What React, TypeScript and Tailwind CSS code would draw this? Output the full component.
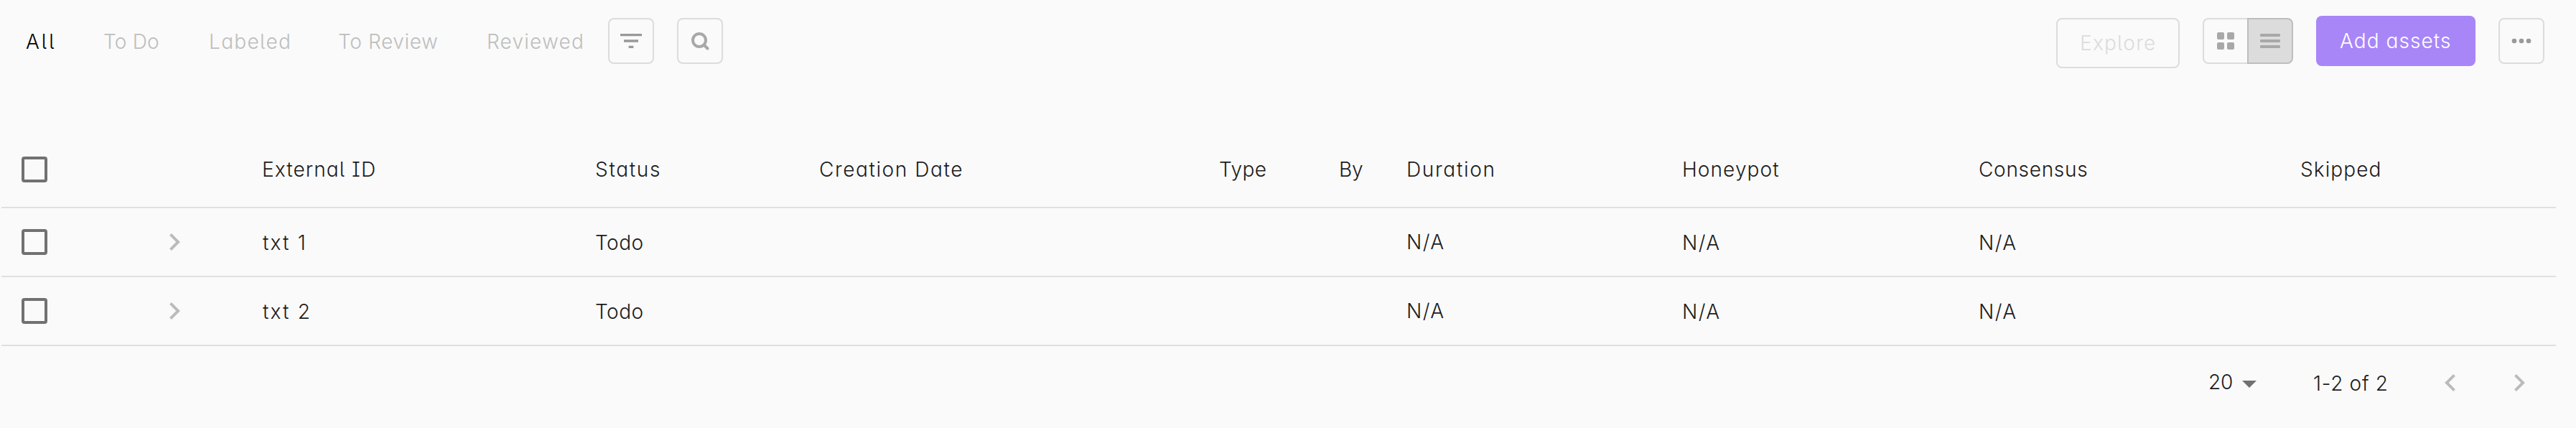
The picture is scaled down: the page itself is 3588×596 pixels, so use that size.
import type { ReactNode } from "react";

const tabs = [
  { label: "All", className: "w-[108px] tracking-[3px] text-black" },
  { label: "To Do", className: "w-[147px] tracking-[0.2px]" },
  { label: "Labeled", className: "w-[180px] tracking-[1.34px]" },
  { label: "To Review", className: "w-[207px] tracking-[0.63px]" },
  { label: "Reviewed", className: "w-[169px] tracking-[1.23px]" },
];

const rows = ["txt 1", "txt 2"];

const gridCols =
  "grid grid-cols-[206px_129px_464px_312px_557px_167px_94px_384px_413px_448px_1fr] items-center border-b-2 border-[#e0e0e0] pl-7";

function IconButton({ label, children }: { label: string; children: ReactNode }) {
  return (
    <button
      aria-label={label}
      className="mt-[25px] flex size-16 shrink-0 items-center justify-center rounded-lg border-2 border-[#dcdcdc]"
    >
      {children}
    </button>
  );
}

function Checkbox() {
  return <span role="checkbox" aria-checked="false" className="block size-9 rounded-[4px] border-4 border-[#717171]" />;
}

function ChevronRight() {
  return (
    <svg viewBox="8.59 6 7.41 12" className="h-6 w-[15px] shrink-0 fill-[#bbbbbb]">
      <path d="M10 6L8.59 7.41 13.17 12l-4.58 4.59L10 18l6-6z" />
    </svg>
  );
}

function ChevronLeft() {
  return (
    <svg viewBox="8 6 7.41 12" className="h-6 w-[15px] shrink-0 fill-[#bbbbbb]">
      <path d="M15.41 7.41L14 6l-6 6 6 6 1.41-1.41L10.83 12z" />
    </svg>
  );
}

function Toolbar() {
  return (
    <header className="flex h-[184px] items-start pr-11">
      <nav className="flex h-[116px] items-center pl-9 text-[#bebebe]">
        {tabs.map((tab) => (
          <a key={tab.label} className={`block whitespace-nowrap ${tab.className}`}>
            {tab.label}
          </a>
        ))}
      </nav>
      <div className="flex gap-8">
        <IconButton label="Filter">
          <svg viewBox="0 0 24 24" className="size-10 fill-[#999999]">
            <path d="M10 18h4v-2h-4v2zM3 6v2h18V6H3zm3 7h12v-2H6v2z" />
          </svg>
        </IconButton>
        <IconButton label="Search">
          <svg viewBox="0 0 26 26" className="size-[26px] fill-none stroke-[#a8a8a8] stroke-4">
            <circle cx="12" cy="12" r="9" />
            <path d="M18.5 18.5L23.5 23.5" strokeLinecap="round" />
          </svg>
        </IconButton>
      </div>
      <div className="ml-auto flex items-start gap-8">
        <button className="mt-[25px] flex h-[70px] w-[172px] items-center rounded-lg border-2 border-[#dcdcdc] pl-[31px] tracking-[1.24px] text-[#dcdcdc]">
          Explore
        </button>
        <div className="mt-[25px] flex h-16 w-[126px]">
          <button
            aria-label="Grid view"
            className="flex w-[62px] items-center justify-center rounded-l-lg border-2 border-r-0 border-[#dcdcdc]"
          >
            <svg viewBox="0 0 24 24" className="size-6 fill-[#a8a8a8]">
              <rect width="10" height="10" rx="2" />
              <rect x="14" width="10" height="10" rx="2" />
              <rect y="14" width="10" height="10" rx="2" />
              <rect x="14" y="14" width="10" height="10" rx="2" />
            </svg>
          </button>
          <button
            aria-label="List view"
            className="flex w-16 items-center justify-center rounded-r-lg border-2 border-[#bdbdbd] bg-[#dcdcdc]"
          >
            <svg viewBox="0 0 28 20" className="h-5 w-7 fill-[#a8a8a8]">
              <rect width="28" height="4" rx="1.2" />
              <rect y="8" width="28" height="4" rx="1.2" />
              <rect y="16" width="28" height="4" rx="1.2" />
            </svg>
          </button>
        </div>
        <button className="mt-[22px] flex h-[70px] w-[222px] items-center rounded-lg bg-[#a886f7] pl-[33px] tracking-[1.07px] whitespace-nowrap text-white">
          Add assets
        </button>
        <IconButton label="More">
          <svg viewBox="0 0 24 24" className="size-10 fill-[#999999]">
            <circle cx="6" cy="12" r="2" />
            <circle cx="12" cy="12" r="2" />
            <circle cx="18" cy="12" r="2" />
          </svg>
        </IconButton>
      </div>
    </header>
  );
}

export default function App() {
  return (
    <div className="h-[596px] w-full overflow-hidden bg-[#fafafa] font-['Inter',sans-serif] text-[28px] leading-10 font-[330] text-[#1c1c1c] [font-feature-settings:'cv11','cv08','cv05']">
      <Toolbar />
      <main className="ml-0.5 w-[3558px]">
        <div className={`h-[106px] whitespace-nowrap ${gridCols}`}>
          <Checkbox />
          <span />
          <span className="tracking-[1.1px]">External ID</span>
          <span className="tracking-[1.7px]">Status</span>
          <span className="tracking-[1.6px]">Creation Date</span>
          <span className="tracking-[0.4px]">Type</span>
          <span className="tracking-[-0.2px]">By</span>
          <span className="tracking-[1.7px]">Duration</span>
          <span className="tracking-[1.1px]">Honeypot</span>
          <span className="tracking-[0.7px]">Consensus</span>
          <span className="tracking-[1.1px]">Skipped</span>
        </div>
        {rows.map((name) => (
          <div key={name} className={`h-24 whitespace-nowrap ${gridCols}`}>
            <Checkbox />
            <ChevronRight />
            <span className="pt-0.5 pl-px tracking-[2.2px]">{name}</span>
            <span className="pt-0.5 tracking-[0.5px]">Todo</span>
            <span />
            <span />
            <span />
            <span className="tracking-[1.5px]">N/A</span>
            <span className="pt-0.5 tracking-[1.5px]">N/A</span>
            <span className="pt-0.5 tracking-[1.5px]">N/A</span>
            <span />
          </div>
        ))}
        <footer className="flex h-[102px] items-center justify-end pr-[43px]">
          <span className="w-[47px] pb-0.5 tracking-[-0.2px]">20</span>
          <svg viewBox="0 0 20 10" className="mt-1 h-2.5 w-5 shrink-0 fill-[#717171]">
            <path d="M0 0h20L10 10z" />
          </svg>
          <span className="ml-[79px] w-[183px] pt-0.5 tracking-[0.7px] whitespace-nowrap">1-2 of 2</span>
          <button aria-label="Previous page" className="flex">
            <ChevronLeft />
          </button>
          <button aria-label="Next page" className="ml-[82px] flex">
            <ChevronRight />
          </button>
        </footer>
      </main>
    </div>
  );
}
